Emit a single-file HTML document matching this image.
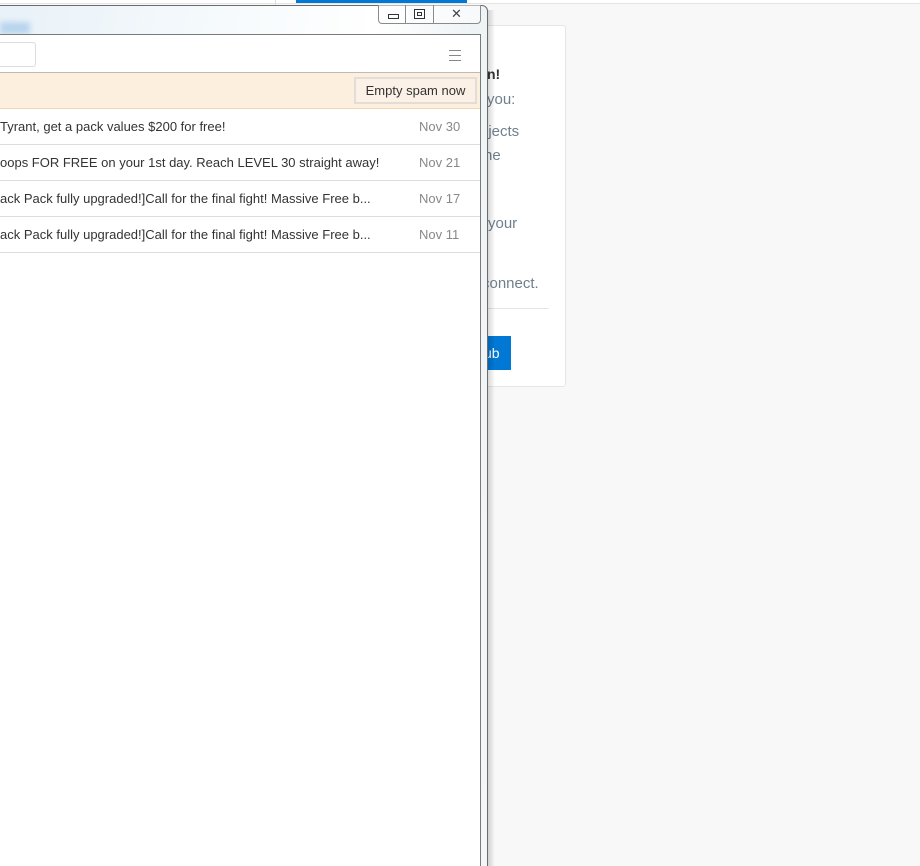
<!DOCTYPE html>
<html><head><meta charset="utf-8"><style>
*{margin:0;padding:0;box-sizing:border-box}
html,body{width:920px;height:866px;overflow:hidden}
body{background:#f8f8f8;font-family:"Liberation Sans","DejaVu Sans",sans-serif;position:relative}
.a{position:absolute}
.t{position:absolute;font-size:15px;color:#6f7f8e;white-space:nowrap}
.row{position:absolute;left:0;width:480px;height:36px;border-bottom:1px solid #ddd;font-size:13px;color:#333}
.row span{position:absolute;top:10px;white-space:nowrap}
.row .d{left:419px;color:#888}
</style></head><body>
<div class="a" style="left:0;top:0;width:920px;height:4px;border-bottom:1px solid #e5e5e5;background:#fff"></div>
<div class="a" style="left:296px;top:0;width:171px;height:3px;background:#0078d4"></div>
<div class="a" style="left:275px;top:0;width:1px;height:5px;background:#ddd"></div>
<div class="a" style="left:440px;top:25px;width:126px;height:362px;background:#fff;border:1px solid #e6e6e6;border-radius:3px"></div>
<div class="t" style="left:487px;top:66px;color:#333;font-weight:bold;font-size:14px">n!</div>
<div class="t" style="left:487px;top:91px">you:</div>
<div class="t" style="left:480px;top:123px">bjects</div>
<div class="t" style="left:484px;top:147px">ne</div>
<div class="t" style="left:488px;top:215px">your</div>
<div class="t" style="left:482px;top:275px">connect.</div>
<div class="a" style="left:480px;top:308px;width:69px;height:1px;background:#e5e5e5"></div>
<div class="a" style="left:478px;top:336px;width:33px;height:34px;background:#0078d4;color:#fff;font-size:14px;line-height:34px;padding-left:6px">ub</div>
<div class="a" style="left:487px;top:10px;width:8px;height:856px;background:linear-gradient(90deg,rgba(0,0,0,.18),rgba(0,0,0,0))"></div>
<div class="a" style="left:-10px;top:5px;width:498px;height:870px;background:linear-gradient(100deg,#e8f1f8 0%,#f7fbfd 40%,#ffffff 60%,#eef3f6 75%,#f4f7f9 100%);border:1px solid #6c6c6c;border-radius:0 6px 0 0"></div>
<div class="a" style="left:0;top:22px;width:30px;height:12px;background:#b8d4ee;filter:blur(3px)"></div>
<div class="a" style="left:378px;top:5px;width:103px;height:19px;border:1px solid #8a8a8a;border-top:none;border-radius:0 0 4px 4px;background:rgba(255,255,255,.5)"></div>
<div class="a" style="left:405px;top:5px;width:1px;height:19px;background:#8a8a8a"></div>
<div class="a" style="left:433px;top:5px;width:1px;height:19px;background:#8a8a8a"></div>
<div class="a" style="left:388px;top:14px;width:11px;height:5px;border:1px solid #333"></div>
<div class="a" style="left:414px;top:9px;width:11px;height:10px;border:1px solid #333"></div>
<div class="a" style="left:417px;top:12px;width:5px;height:4px;border:1px solid #333"></div>
<div class="a" style="left:451px;top:6px;font-size:13px;color:#444">✕</div>
<div class="a" style="left:-1px;top:34px;width:482px;height:840px;background:#fff;border:1px solid #7a7a7a"></div>
<div class="a" style="left:-5px;top:42px;width:41px;height:25px;border:1px solid #ddd;border-radius:3px"></div>
<div class="a" style="left:449px;top:50px;width:12px;height:1px;background:#888"></div>
<div class="a" style="left:449px;top:55px;width:12px;height:1px;background:#888"></div>
<div class="a" style="left:449px;top:60px;width:12px;height:1px;background:#888"></div>
<div class="a" style="left:0;top:72px;width:480px;height:1px;background:#bbb"></div>
<div class="a" style="left:0;top:73px;width:480px;height:36px;background:#fcefdd;border-bottom:1px solid #efd7b3"></div>
<div class="a" style="left:354px;top:77px;width:123px;height:27px;border:2px solid #e2ddd6;background:#fbf1e6;font-size:13px;color:#333;line-height:23px;text-align:center">Empty spam now</div>
<div class="row" style="top:109px"><span style="left:0">Tyrant, get a pack values $200 for free!</span><span class="d">Nov 30</span></div>
<div class="row" style="top:145px"><span style="left:0">oops FOR FREE on your 1st day. Reach LEVEL 30 straight away!</span><span class="d">Nov 21</span></div>
<div class="row" style="top:181px"><span style="left:0">ack Pack fully upgraded!]Call for the final fight! Massive Free b...</span><span class="d">Nov 17</span></div>
<div class="row" style="top:217px"><span style="left:0">ack Pack fully upgraded!]Call for the final fight! Massive Free b...</span><span class="d">Nov 11</span></div>
</body></html>
